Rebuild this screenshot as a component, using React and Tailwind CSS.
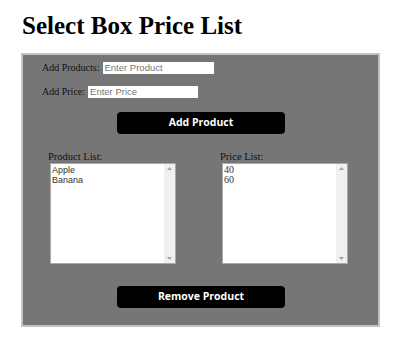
import React from "react";

const products = ["Apple", "Banana"];
const prices = ["40", "60"];

const ListBox = ({ label, items, itemClass, className }) => (
  <div className={`flex flex-col ${className}`}>
    <span className="-ml-[2px] text-[10.5px] leading-[13px] text-[#111]">{label}</span>
    <div className="flex h-[101px] w-[126px] border border-[#a9a9a9] bg-white">
      <div className="flex-1 pl-[1px] pt-[1px]">
        {items.map((item) => (
          <div key={item} className={`leading-[10px] text-[#333] ${itemClass}`}>
            {item}
          </div>
        ))}
      </div>
      <div className="flex w-[11px] flex-col items-center justify-between bg-[#f0f0f0] py-[3px]">
        <svg width="5" height="3" viewBox="0 0 5 3">
          <path d="M2.5 0 L5 3 L0 3 Z" fill="#a3a3a3" />
        </svg>
        <svg width="5" height="3" viewBox="0 0 5 3">
          <path d="M0 0 L5 0 L2.5 3 Z" fill="#a3a3a3" />
        </svg>
      </div>
    </div>
  </div>
);

const BlackButton = ({ children, className }) => (
  <button
    className={`flex w-[168px] items-center justify-center rounded-[4px] bg-black text-[10.5px] font-bold text-white ${className}`}
    style={{ fontFamily: '"Open Sans", "DejaVu Sans", sans-serif' }}
  >
    {children}
  </button>
);

export default function App() {
  return (
    <div
      className="h-[355px] w-[400px] bg-white pt-[13px]"
      style={{ fontFamily: '"Liberation Serif", "Times New Roman", serif' }}
    >
      <h1 className="ml-[22px] text-[25px] font-bold leading-[25px] text-black">
        Select Box Price List
      </h1>

      <div className="ml-[21px] mt-[15px] h-[274px] w-[359px] border-2 border-[#c2c2c2] bg-[#767676]">
        <div className="ml-[19px] mt-[7px] flex h-[12px] items-center">
          <span className="text-[10px] leading-[12px] text-[#111]">Add Products:</span>
          <input
            className="ml-[3px] h-[12px] w-[111px] bg-white px-[2px] text-[9.5px] leading-[12px] outline-none placeholder:text-[#777]"
            style={{ fontFamily: '"Liberation Sans", Arial, sans-serif' }}
            placeholder="Enter Product"
          />
        </div>

        <div className="ml-[19px] mt-[12px] flex h-[12px] items-center">
          <span className="text-[10px] leading-[12px] text-[#111]">Add Price:</span>
          <input
            className="ml-[3px] h-[12px] w-[110px] bg-white px-[2px] text-[9.5px] leading-[12px] outline-none placeholder:text-[#777]"
            style={{ fontFamily: '"Liberation Sans", Arial, sans-serif' }}
            placeholder="Enter Price"
          />
        </div>

        <BlackButton className="ml-[94px] mt-[14px] h-[22px]">Add Product</BlackButton>

        <div className="mt-[16px] flex">
          <ListBox
            label="Product List:"
            items={products}
            itemClass="text-[9px] font-['Liberation_Sans',Arial,sans-serif]"
            className="ml-[27px]"
          />
          <ListBox
            label="Price List:"
            items={prices}
            itemClass="text-[10px]"
            className="ml-[46px]"
          />
        </div>

        <BlackButton className="ml-[94px] mt-[22px] h-[22px]">Remove Product</BlackButton>
      </div>
    </div>
  );
}
